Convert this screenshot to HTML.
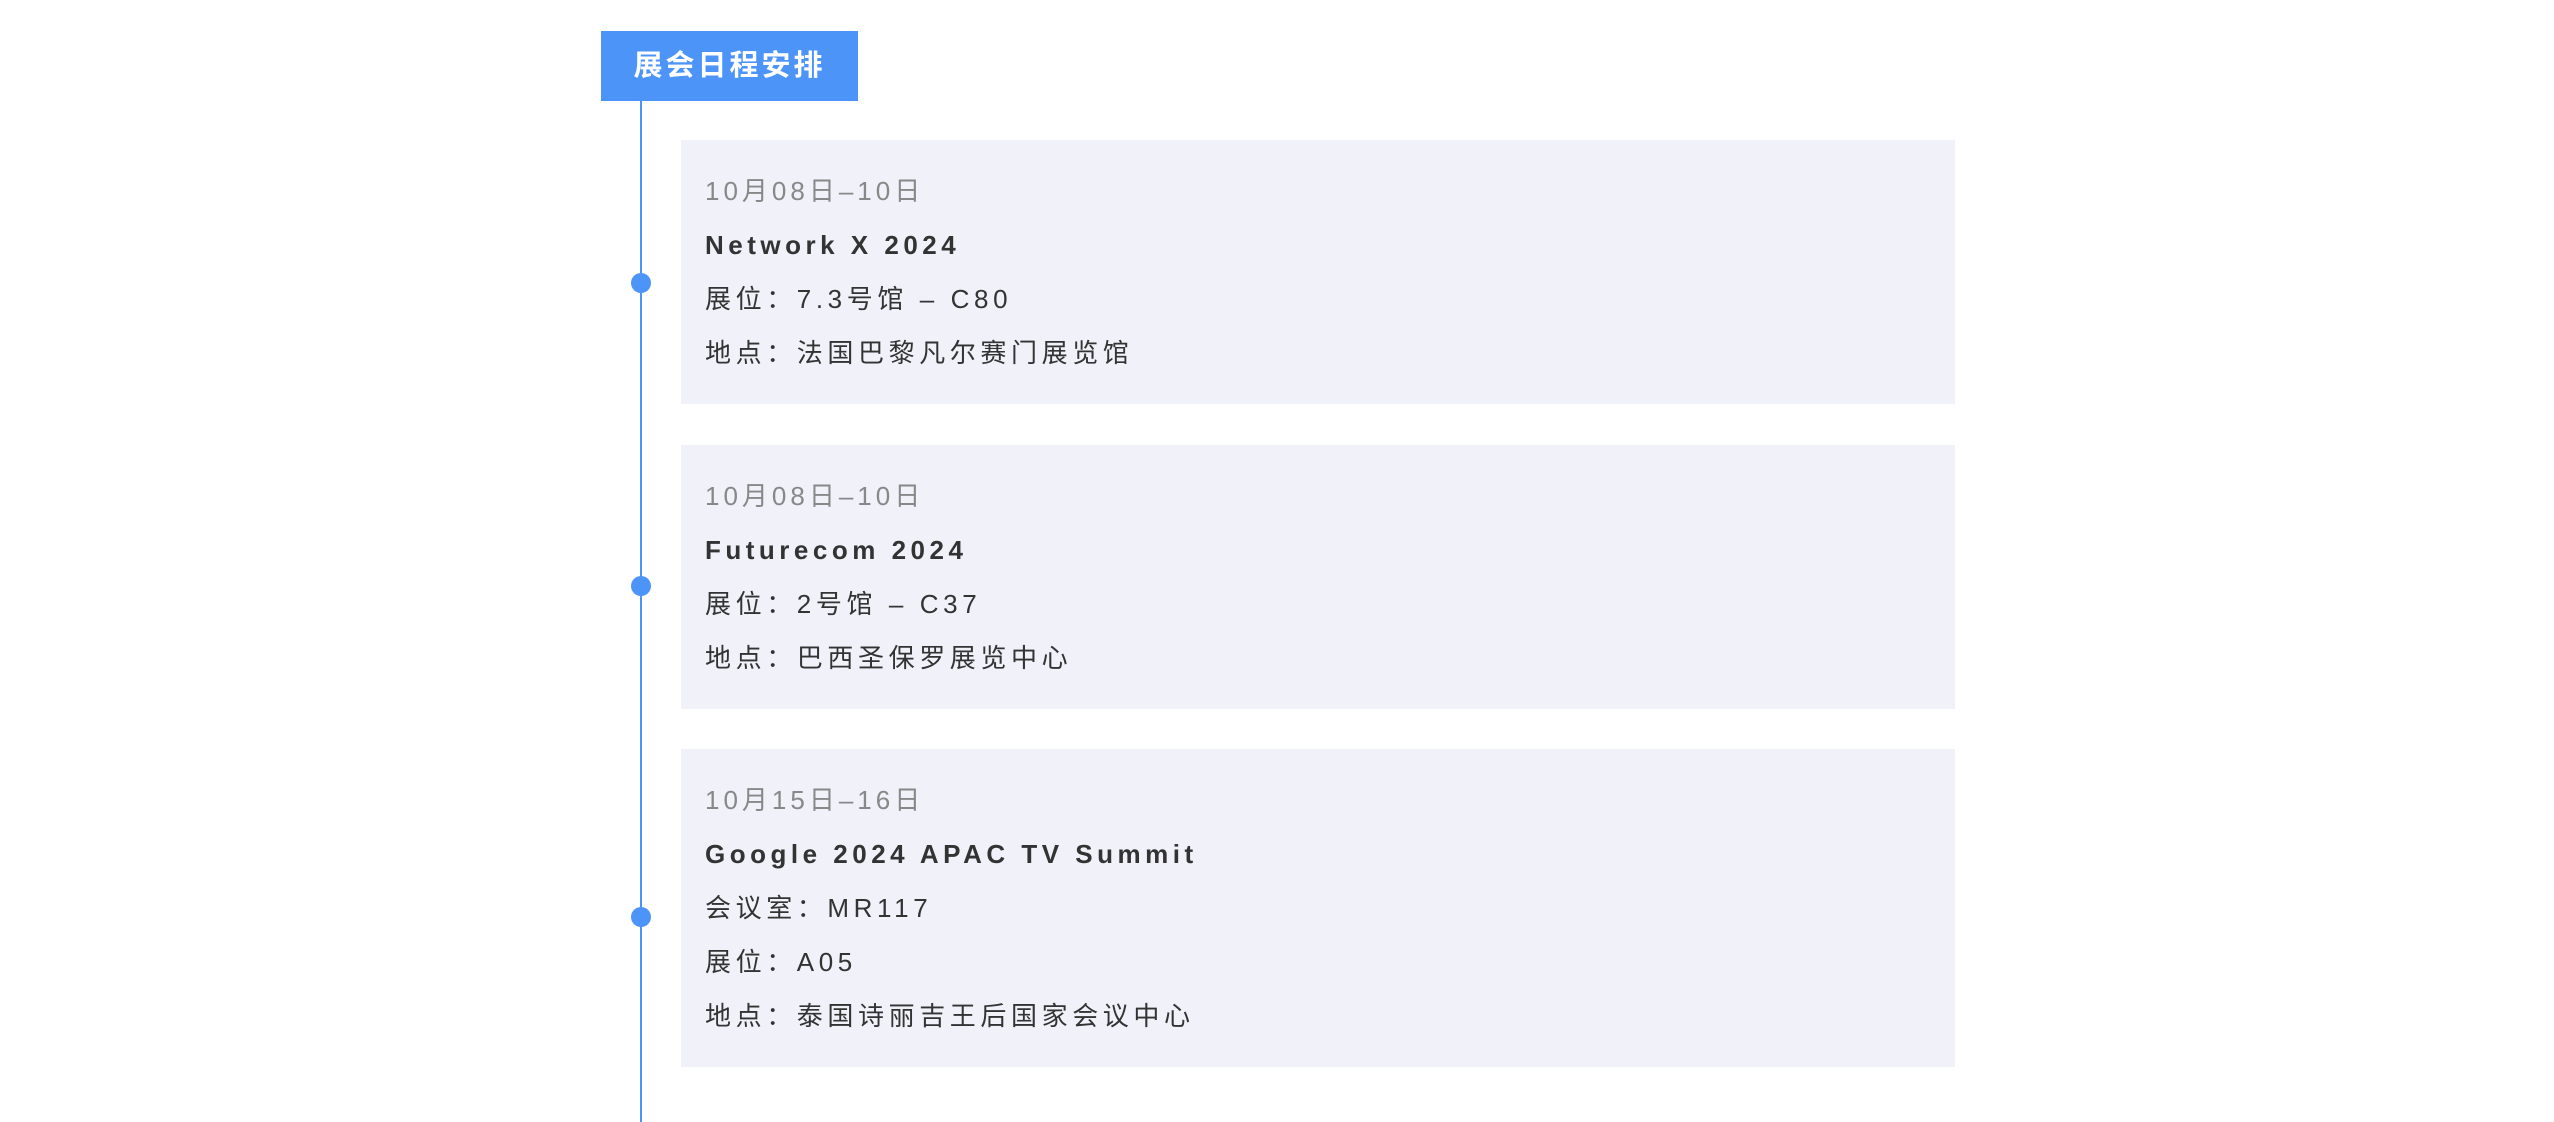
<!DOCTYPE html>
<html><head><meta charset="utf-8"><style>
html,body{margin:0;padding:0;background:#fff;width:2554px;height:1122px;overflow:hidden;}
body{position:relative;font-family:"Liberation Sans","Noto Sans CJK SC",sans-serif;}
.hdr{position:absolute;left:601px;top:31px;width:257px;height:70px;background:#4d94f8;color:#fff;font-weight:bold;font-size:29px;line-height:70px;text-align:center;letter-spacing:3px;}
.line{position:absolute;left:640px;top:101px;width:2px;height:1021px;background:#4d94f8;}
.dot{position:absolute;left:631px;width:20px;height:20px;border-radius:50%;background:#4d94f8;}
.card{position:absolute;left:681px;width:1274px;background:#f0f1f9;box-sizing:border-box;padding:24px 24px;}
.card div{line-height:54px;font-size:26px;color:#333;letter-spacing:4.6px;white-space:nowrap;}
.card .d{color:#888;letter-spacing:4px;}
.card .t{font-weight:bold;letter-spacing:4.5px;}
</style></head><body>
<div class="hdr">展会日程安排</div>
<div class="line"></div>
<div class="dot" style="top:273px"></div>
<div class="dot" style="top:576px"></div>
<div class="dot" style="top:907px"></div>
<div class="card" style="top:140px;height:264px">
<div class="d">10月08日–10日</div>
<div class="t">Network X 2024</div>
<div>展位：7.3号馆 – C80</div>
<div>地点：法国巴黎凡尔赛门展览馆</div>
</div>
<div class="card" style="top:445px;height:264px">
<div class="d">10月08日–10日</div>
<div class="t">Futurecom 2024</div>
<div>展位：2号馆 – C37</div>
<div>地点：巴西圣保罗展览中心</div>
</div>
<div class="card" style="top:749px;height:318px">
<div class="d">10月15日–16日</div>
<div class="t">Google 2024 APAC TV Summit</div>
<div>会议室：MR117</div>
<div>展位：A05</div>
<div>地点：泰国诗丽吉王后国家会议中心</div>
</div>
</body></html>
